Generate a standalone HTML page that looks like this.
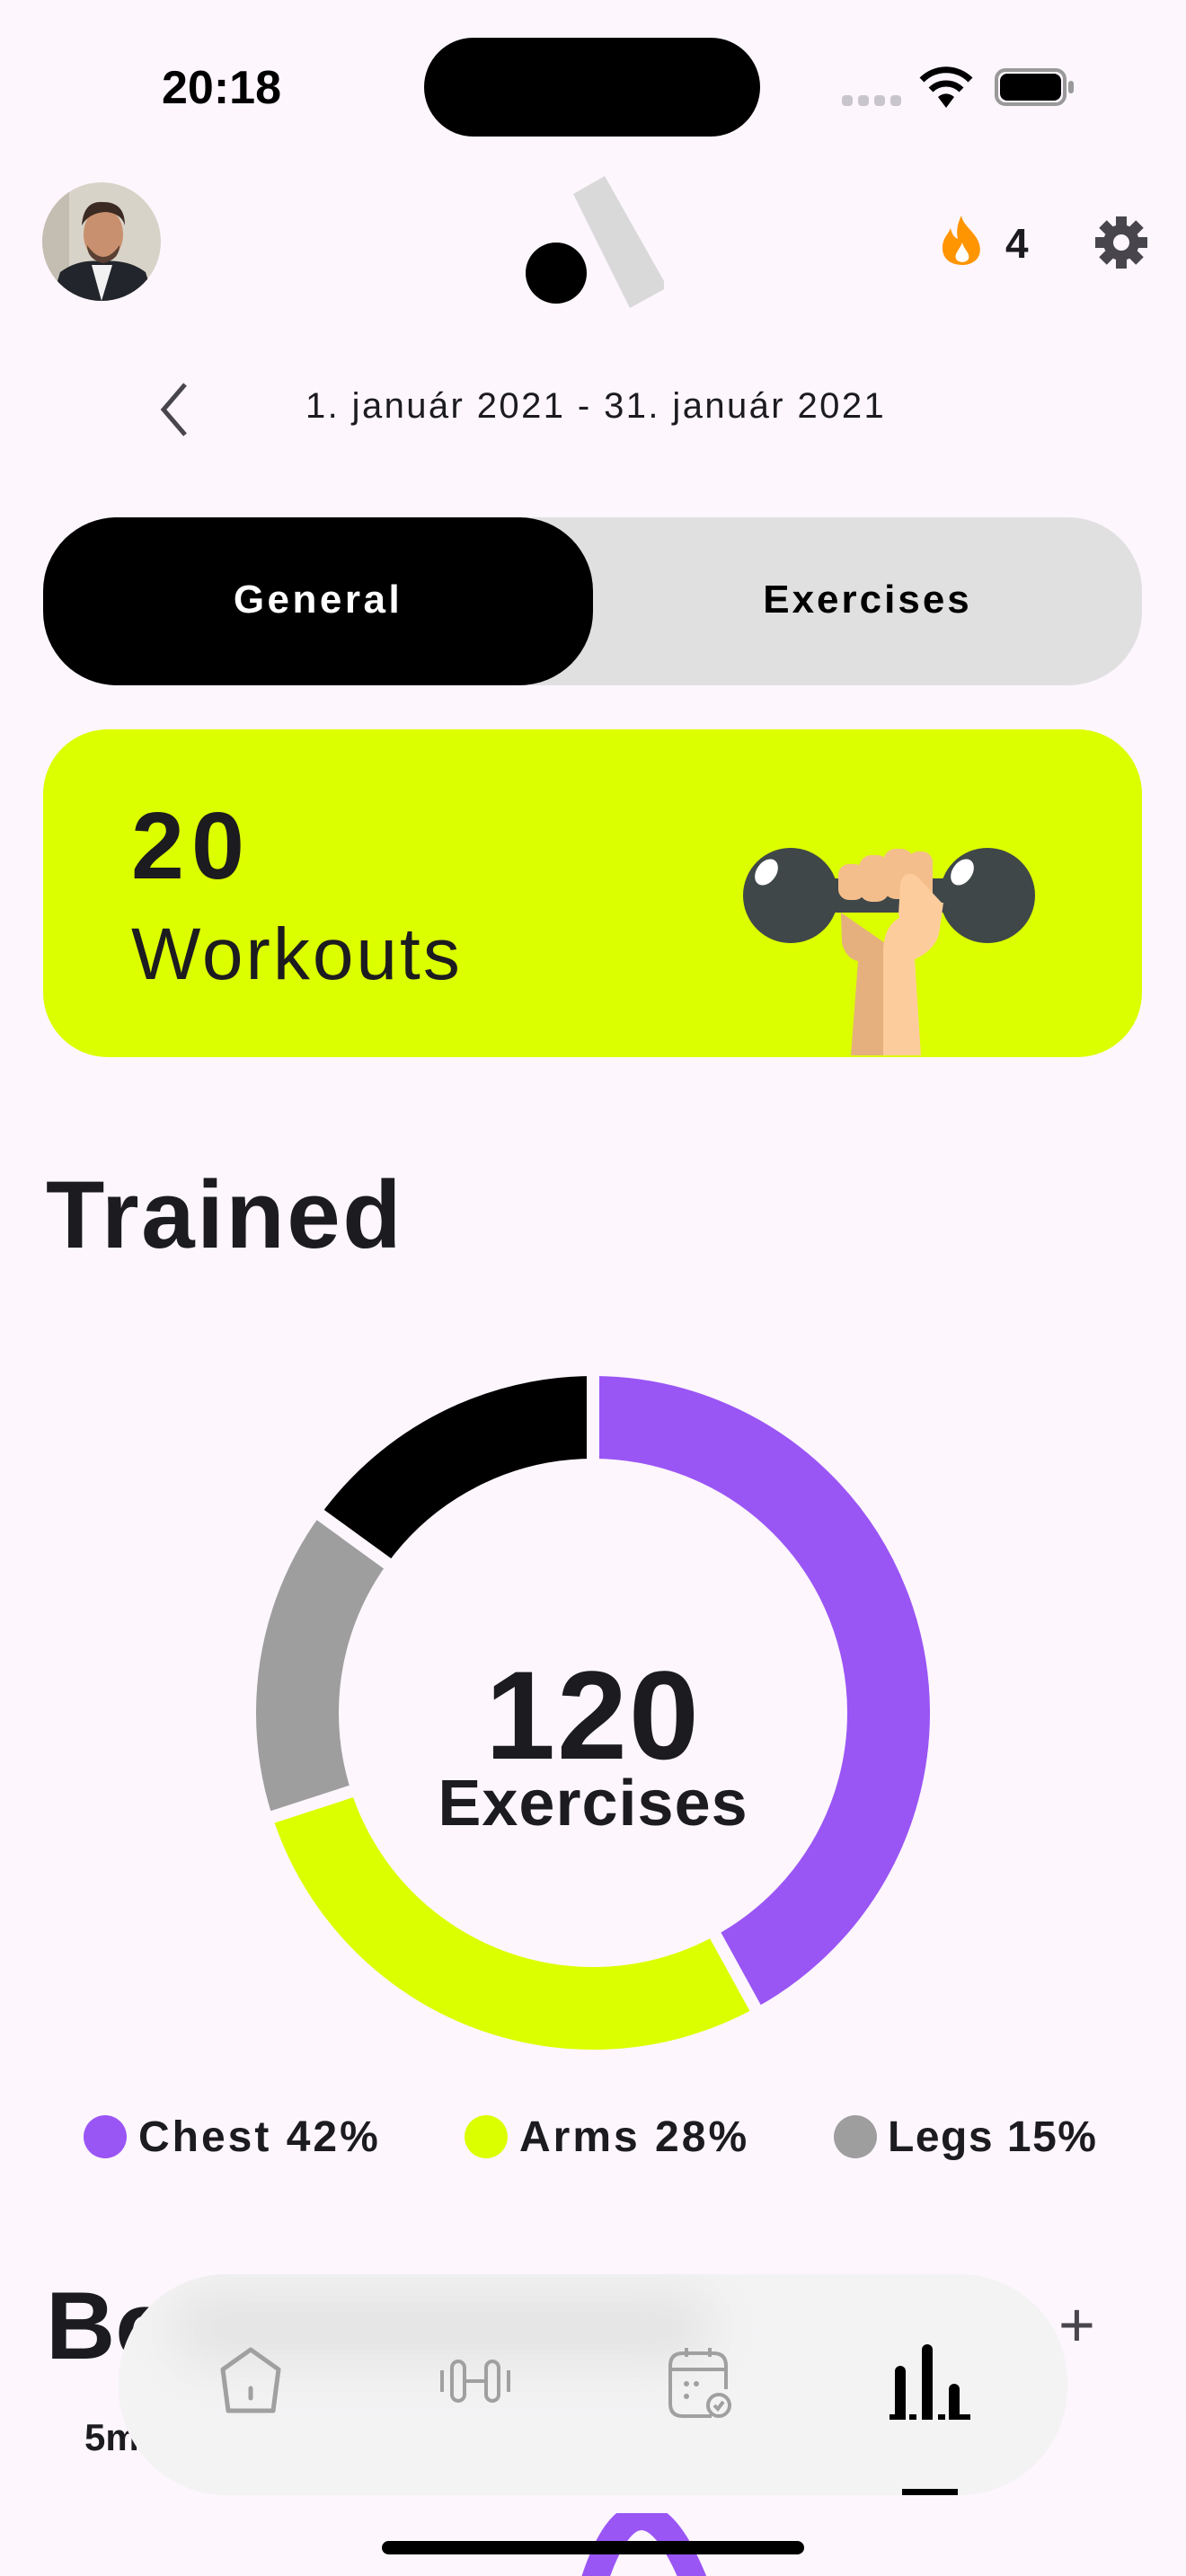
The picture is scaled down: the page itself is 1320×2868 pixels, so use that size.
<!DOCTYPE html>
<html><head><meta charset="utf-8"><style>
*{margin:0;padding:0;box-sizing:border-box}
body{width:1320px;height:2868px;background:#fdf6fd;font-family:"Liberation Sans",sans-serif;color:#1c1b1f;position:relative;overflow:hidden}
.a{position:absolute}
.b{font-weight:bold}
</style></head><body>
<div class="a b" style="left:180px;top:68px;font-size:52px;color:#000;letter-spacing:0px">20:18</div>
<div class="a" style="left:472px;top:42px;width:374px;height:110px;border-radius:55px;background:#000"></div>
<div class="a" style="left:937px;top:106px;width:12px;height:12px;border-radius:4px;background:#c8c6cc;box-shadow:18px 0 #c8c6cc,36px 0 #c8c6cc,54px 0 #c8c6cc"></div>
<svg class="a" style="left:1022px;top:74px" width="62" height="46" viewBox="0 0 62 46"><path d="M31 46L22 34A13 13 0 0 1 40 34Z" fill="#000"/><path d="M14 26A24 24 0 0 1 48 26" stroke="#000" stroke-width="7" fill="none"/><path d="M4 15A38 38 0 0 1 58 15" stroke="#000" stroke-width="7" fill="none"/></svg>
<div class="a" style="left:1107px;top:76px;width:80px;height:42px;border:4px solid #999;border-radius:12px"></div>
<div class="a" style="left:1113px;top:82px;width:68px;height:30px;border-radius:8px;background:#000"></div>
<div class="a" style="left:1189px;top:90px;width:6px;height:14px;border-radius:3px;background:#999"></div>

<svg class="a" style="left:47px;top:203px" width="132" height="132" viewBox="0 0 132 132"><defs><clipPath id="c"><circle cx="66" cy="66" r="66"/></clipPath></defs><g clip-path="url(#c)"><rect width="132" height="132" fill="#d8d3c8"/><rect x="0" width="30" height="132" fill="#c4beb2"/><path d="M10 132L20 100Q40 85 66 88Q95 85 115 100L125 132Z" fill="#22252b"/><path d="M55 92L66 132L78 92Z" fill="#f2f2f2"/><ellipse cx="68" cy="58" rx="22" ry="29" fill="#c8906e"/><path d="M44 48Q46 20 68 22Q92 22 92 48Q88 34 70 33Q52 34 44 48Z" fill="#3a2a22"/><path d="M50 70Q68 96 86 70Q86 86 68 90Q50 86 50 70Z" fill="#5a4033"/></g></svg>

<svg class="a" style="left:580px;top:194px" width="170" height="150" viewBox="580 194 170 150"><polygon points="673,196 638,216 701,343 739,322 739,313" fill="#d9d9d9"/><circle cx="619" cy="304" r="34" fill="#000"/></svg>

<svg class="a" style="left:1046px;top:240px" width="50" height="55" viewBox="0 0 50 55"><path d="M24 0C26 12 40 18 44 32C48 48 36 55 25 55C12 55 2 48 3 34C4 24 10 20 12 14C14 22 16 24 20 26C18 16 20 8 24 0Z" fill="#ff9500"/><path d="M25 30C27 38 34 42 32 48C30 53 20 53 18 48C16 42 22 38 25 30Z" fill="#fff"/></svg>
<div class="a b" style="left:1119px;top:244px;font-size:46px;color:#1c1b1f">4</div>
<svg class="a" style="left:1218px;top:240px" width="60" height="60" viewBox="-30 -30 60 60"><g fill="#48464c"><circle r="20"/><g id="t"><rect x="-6" y="-29" width="12" height="14"/></g><use href="#t" transform="rotate(45)"/><use href="#t" transform="rotate(90)"/><use href="#t" transform="rotate(135)"/><use href="#t" transform="rotate(180)"/><use href="#t" transform="rotate(225)"/><use href="#t" transform="rotate(270)"/><use href="#t" transform="rotate(315)"/></g><circle r="9" fill="#fdf6fd"/></svg>

<svg class="a" style="left:172px;top:424px" width="44" height="64" viewBox="0 0 44 64"><path d="M34 4L10 32L34 60" stroke="#48464c" stroke-width="5" fill="none"/></svg>
<div class="a" style="left:340px;top:430px;font-size:40px;color:#1c1b1f;letter-spacing:2.4px">1. január 2021 - 31. január 2021</div>

<div class="a" style="left:48px;top:576px;width:1223px;height:187px;border-radius:82px;background:#e0e0e0"></div>
<div class="a" style="left:48px;top:576px;width:612px;height:187px;border-radius:82px;background:#000"></div>
<div class="a b" style="left:48px;top:643px;width:612px;text-align:center;font-size:44px;color:#fff;letter-spacing:3.5px">General</div>
<div class="a b" style="left:660px;top:643px;width:611px;text-align:center;font-size:44px;color:#000;letter-spacing:3px">Exercises</div>

<div class="a" style="left:48px;top:812px;width:1223px;height:365px;border-radius:72px;background:#dcff00"></div>
<div class="a b" style="left:146px;top:882px;font-size:106px;color:#1c1b1f;letter-spacing:8px">20</div>
<div class="a" style="left:146px;top:1016px;font-size:82px;color:#1c1b1f;letter-spacing:3px">Workouts</div>
<svg class="a" style="left:820px;top:930px" width="340" height="247" viewBox="820 930 340 247">
<rect x="900" y="978" width="200" height="38" fill="#3f4749"/>
<circle cx="880" cy="997" r="53" fill="#3f4749"/><circle cx="1099" cy="997" r="53" fill="#3f4749"/>
<ellipse cx="853" cy="971" rx="11" ry="16" transform="rotate(35 853 971)" fill="#fff"/>
<ellipse cx="1071" cy="971" rx="11" ry="16" transform="rotate(35 1071 971)" fill="#fff"/>
<path d="M936 1016L937 1050Q942 1068 955 1070L947 1175L985 1175L985 1050Z" fill="#e6b07e"/>
<path d="M983 1175L1025 1175L1018 1068Q1040 1058 1045 1040L1050 1005L1040 1005Q1020 1012 1004 1020Q983 1030 983 1060Z" fill="#fdcc9d"/>
<rect x="933" y="962" width="30" height="40" rx="12" fill="#f3be8b"/>
<rect x="956" y="952" width="34" height="52" rx="14" fill="#f3be8b"/>
<rect x="983" y="945" width="34" height="56" rx="14" fill="#f3be8b"/>
<rect x="1010" y="948" width="28" height="60" rx="12" fill="#f3be8b"/>
<path d="M1000 1018L1004 1032L1048 1005L1020 975Q1005 968 1002 985Z" fill="#fdcc9d"/>
</svg>

<div class="a b" style="left:51px;top:1290px;font-size:107px;color:#1c1b1f;letter-spacing:2.5px">Trained</div>

<svg class="a" style="left:280px;top:1527px" width="760" height="760" viewBox="-380 -380 760 760">
<g transform="rotate(-90)" fill="none" stroke-width="92">
<circle r="329" stroke="#9a55f5" stroke-dasharray="868 2067" stroke-dashoffset="0"/>
<circle r="329" stroke="#dcff00" stroke-dasharray="579 2067" stroke-dashoffset="-868"/>
<circle r="329" stroke="#9e9e9e" stroke-dasharray="310 2067" stroke-dashoffset="-1447"/>
<circle r="329" stroke="#000" stroke-dasharray="310 2067" stroke-dashoffset="-1757"/>
</g>
<g stroke="#fdf6fd" stroke-width="14">
<line x1="0" y1="-270" x2="0" y2="-390"/>
<line x1="0" y1="-270" x2="0" y2="-390" transform="rotate(151.2)"/>
<line x1="0" y1="-270" x2="0" y2="-390" transform="rotate(252)"/>
<line x1="0" y1="-270" x2="0" y2="-390" transform="rotate(306)"/>
</g>
</svg>
<div class="a b" style="left:360px;top:1840px;width:600px;text-align:center;font-size:140px;color:#1c1b1f;line-height:1;letter-spacing:2px">120</div>
<div class="a b" style="left:360px;top:1972px;width:600px;text-align:center;font-size:72px;color:#1c1b1f;line-height:1;letter-spacing:1px">Exercises</div>

<div class="a" style="left:93px;top:2355px;width:48px;height:48px;border-radius:50%;background:#9a55f5"></div>
<div class="a b" style="left:154px;top:2352px;font-size:48px;letter-spacing:3px">Chest 42%</div>
<div class="a" style="left:517px;top:2355px;width:48px;height:48px;border-radius:50%;background:#dcff00"></div>
<div class="a b" style="left:578px;top:2352px;font-size:48px;letter-spacing:3px">Arms 28%</div>
<div class="a" style="left:928px;top:2355px;width:48px;height:48px;border-radius:50%;background:#9e9e9e"></div>
<div class="a b" style="left:988px;top:2352px;font-size:48px;letter-spacing:1.5px">Legs 15%</div>

<div class="a b" style="left:51px;top:2527px;font-size:107px">Body</div>
<div class="a" style="left:1178px;top:2548px;font-size:70px;color:#48464c">+</div>
<div class="a b" style="left:94px;top:2690px;font-size:42px">5m</div>
<svg class="a" style="left:644px;top:2798px" width="160" height="70" viewBox="0 0 160 70"><path d="M16 80Q40 4 70 4Q100 4 130 80" stroke="#9a55f5" stroke-width="30" fill="none"/></svg>

<div class="a" style="left:132px;top:2532px;width:1056px;height:246px;border-radius:120px;background:#f3f3f4;overflow:hidden">
<div class="a" style="left:60px;top:20px;width:600px;height:80px;border-radius:40px;background:#e4e4e4;filter:blur(26px)"></div>
</div>
<svg class="a" style="left:238px;top:2612px" width="82" height="80" viewBox="0 0 82 80"><path d="M41 4L72 26L66 72L16 72L10 26Z" stroke="#a0a0a0" stroke-width="5" fill="none" stroke-linejoin="round"/><line x1="41" y1="47" x2="41" y2="58" stroke="#a0a0a0" stroke-width="5" stroke-linecap="round"/></svg>
<svg class="a" style="left:488px;top:2626px" width="82" height="50" viewBox="0 0 82 50"><g stroke="#a0a0a0" stroke-width="4" fill="none"><rect x="15" y="3" width="14" height="44" rx="7"/><rect x="53" y="3" width="14" height="44" rx="7"/><line x1="29" y1="25" x2="53" y2="25"/><line x1="4" y1="13" x2="4" y2="37"/><line x1="78" y1="13" x2="78" y2="37"/></g></svg>
<svg class="a" style="left:742px;top:2612px" width="76" height="84" viewBox="0 0 76 84"><g stroke="#a0a0a0" stroke-width="4" fill="none"><path d="M50 78H18Q4 78 4 64V22Q4 8 18 8H52Q66 8 66 22V48"/><line x1="4" y1="26" x2="66" y2="26"/><line x1="22" y1="2" x2="22" y2="12"/><line x1="48" y1="2" x2="48" y2="12"/><circle cx="58" cy="66" r="12"/><path d="M53 66L57 70L63 62"/></g><g fill="#a0a0a0"><circle cx="22" cy="42" r="3"/><circle cx="33" cy="42" r="3"/><circle cx="22" cy="56" r="3"/></g></svg>
<svg class="a" style="left:990px;top:2610px" width="90" height="86" viewBox="0 0 90 86"><g fill="#000"><rect x="6" y="24" width="12" height="60" rx="6"/><rect x="36" y="0" width="12" height="84" rx="6"/><rect x="66" y="44" width="12" height="40" rx="6"/><rect x="0" y="78" width="90" height="6"/></g><g fill="#f3f3f4"><rect x="18" y="78" width="4" height="6"/><rect x="30" y="78" width="6" height="6"/><rect x="48" y="78" width="6" height="6"/><rect x="62" y="78" width="4" height="6"/></g></svg>
<div class="a" style="left:1004px;top:2771px;width:62px;height:7px;background:#000"></div>
<div class="a" style="left:425px;top:2829px;width:470px;height:15px;border-radius:8px;background:#000"></div>
</body></html>
